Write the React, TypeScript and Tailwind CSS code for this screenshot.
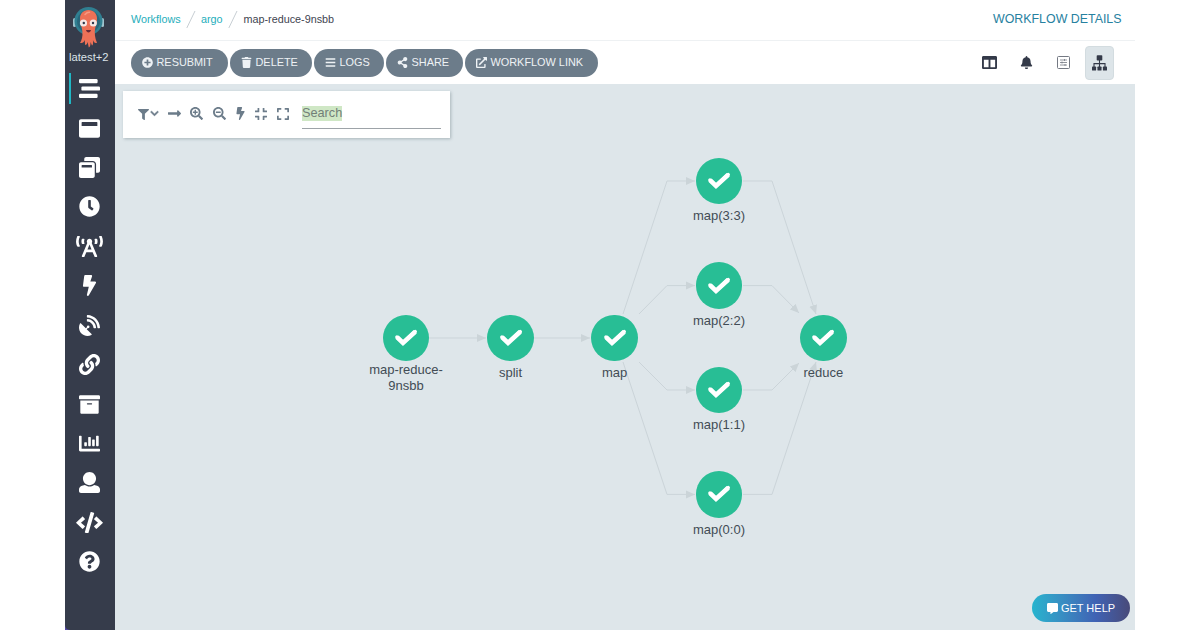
import React from 'react'
import type { IconType } from 'react-icons'
import {
  FaArchive,
  FaBars,
  FaBell,
  FaBolt,
  FaBroadcastTower,
  FaChartBar,
  FaChevronDown,
  FaClock,
  FaCode,
  FaColumns,
  FaCommentAlt,
  FaCompress,
  FaExpand,
  FaExternalLinkAlt,
  FaFilter,
  FaLink,
  FaLongArrowAltRight,
  FaPlusCircle,
  FaQuestionCircle,
  FaSatelliteDish,
  FaSearchMinus,
  FaSearchPlus,
  FaShareAlt,
  FaTrash,
  FaWindowMaximize,
  FaWindowRestore
} from 'react-icons/fa'

interface GraphNode {
  id: string
  label: string
  x: number
  y: number
  wrap?: boolean
}

interface IconProps {
  className?: string
}

const StreamIcon = ({ className }: IconProps) => (
  <svg className={className} viewBox="0 0 21 21" fill="currentColor">
    <rect x="0" y="1" width="18.6" height="4.2" rx="1.2" />
    <rect x="2.4" y="8.4" width="18.6" height="4.2" rx="1.2" />
    <rect x="0" y="15.8" width="18.6" height="4.2" rx="1.2" />
  </svg>
)

const UserIcon = ({ className }: IconProps) => (
  <svg className={className} viewBox="0 0 512 512" fill="currentColor">
    <path d="M256 0c88.366 0 160 71.634 160 160s-71.634 160-160 160S96 248.366 96 160 167.634 0 256 0zm183.283 333.821l-71.313-17.828c-74.923 53.89-165.738 41.864-223.94 0l-71.313 17.828C29.981 344.505 0 382.903 0 426.955V464c0 26.51 21.49 48 48 48h416c26.51 0 48-21.49 48-48v-37.045c0-44.052-29.981-82.45-72.717-93.134z" />
  </svg>
)

const SitemapIcon = ({ className }: IconProps) => (
  <svg className={className} viewBox="0 0 15 16">
    <g fill="currentColor">
      <rect x="4.7" y="0.3" width="5.6" height="5.2" rx="0.8" />
      <rect x="0" y="11.5" width="4.1" height="4.1" rx="0.7" />
      <rect x="5.45" y="11.5" width="4.1" height="4.1" rx="0.7" />
      <rect x="10.9" y="11.5" width="4.1" height="4.1" rx="0.7" />
    </g>
    <path d="M7.5 5V12M2 12V8.6H13V12" fill="none" stroke="currentColor" strokeWidth="1.1" />
  </svg>
)

const CheckIcon = ({ className }: IconProps) => (
  <svg className={className} viewBox="-12 -12 24 24" fill="none" stroke="currentColor">
    <path d="M-9 -0.9L-3 4.9L9.2 -6.3" strokeWidth="4.6" />
    <path d="M-9 -0.9L-3 4.9L9.2 -6.3" strokeWidth="3.6" strokeLinecap="round" />
  </svg>
)

const navItems: { name: string; icon: IconType | React.FC<IconProps>; active?: boolean; wide?: boolean }[] = [
  { name: 'Workflows', icon: StreamIcon, active: true },
  { name: 'Workflow Templates', icon: FaWindowMaximize },
  { name: 'Cluster Workflow Templates', icon: FaWindowRestore },
  { name: 'Cron Workflows', icon: FaClock },
  { name: 'Event Flow', icon: FaBroadcastTower, wide: true },
  { name: 'Sensors', icon: FaBolt },
  { name: 'Event Sources', icon: FaSatelliteDish },
  { name: 'Pipelines', icon: FaLink },
  { name: 'Archived Workflows', icon: FaArchive },
  { name: 'Reports', icon: FaChartBar },
  { name: 'User', icon: UserIcon },
  { name: 'API Docs', icon: FaCode, wide: true },
  { name: 'Help', icon: FaQuestionCircle }
]

const actions: { label: string; icon: IconType; width: string }[] = [
  { label: 'RESUBMIT', icon: FaPlusCircle, width: 'w-[97px]' },
  { label: 'DELETE', icon: FaTrash, width: 'w-[82px]' },
  { label: 'LOGS', icon: FaBars, width: 'w-[70px]' },
  { label: 'SHARE', icon: FaShareAlt, width: 'w-[77px]' },
  { label: 'WORKFLOW LINK', icon: FaExternalLinkAlt, width: 'w-[133px]' }
]

// Node centres, relative to the graph canvas
const nodes: GraphNode[] = [
  { id: 'root', label: 'map-reduce-9nsbb', x: 291, y: 254, wrap: true },
  { id: 'split', label: 'split', x: 395.5, y: 254 },
  { id: 'map', label: 'map', x: 499.7, y: 254 },
  { id: 'map-3', label: 'map(3:3)', x: 604, y: 97 },
  { id: 'map-2', label: 'map(2:2)', x: 604, y: 201.6 },
  { id: 'map-1', label: 'map(1:1)', x: 604, y: 306 },
  { id: 'map-0', label: 'map(0:0)', x: 604, y: 410.4 },
  { id: 'reduce', label: 'reduce', x: 708.4, y: 254 }
]

const edges = [
  'M314 254H371',
  'M419 254H475',
  'M508 230L552 97H580',
  'M524 230L552 201.6H580',
  'M524 278L552 306H580',
  'M508 278L552 410.4H580',
  'M628 97H657L701 230',
  'M628 201.6H657L684 229',
  'M628 306H657L684 279',
  'M628 410.4H657L701 278'
]

const Logo = () => (
  <svg className="h-[43px] w-[33px]" viewBox="0 0 33 43">
    <rect x="1" y="13" width="3" height="9" rx="1.5" fill="#9fc3cd" />
    <rect x="29" y="13" width="3" height="9" rx="1.5" fill="#9fc3cd" />
    <circle cx="16.5" cy="16" r="14" fill="#307f91" />
    <circle cx="16.5" cy="16.5" r="11.4" fill="#28677b" />
    <path
      d="M16.5 5C11.2 5 8 8.8 8 13.6C8 17 8.9 20 9.8 23C10.9 28 10.8 32 9 36.2L8 37.7C10 38.8 12 37.4 12.7 35L13.1 39.8C14.7 40.6 15.4 38 15.6 37L16.8 42.5C18.4 41.8 18.6 39 18.5 37L20 40.5C21.5 40 21.2 37 20.9 35C21.8 37.4 23.1 38.6 25 37.8C22.9 33.4 22.2 28 23.2 23C24.1 20 25 17 25 13.6C25 8.8 21.8 5 16.5 5Z"
      fill="#ed7157"
    />
    <circle cx="11.5" cy="18" r="3.6" fill="#f5e8e6" />
    <circle cx="21.3" cy="18" r="3.6" fill="#f5e8e6" />
    <circle cx="11.8" cy="18" r="1.2" fill="#30384a" />
    <circle cx="21" cy="18" r="1.2" fill="#30384a" />
    <path d="M14 25H19C18.5 28.2 14.5 28.2 14 25Z" fill="#6b2a37" />
    <path d="M13 9.5Q15 7.2 17.5 7.3" stroke="#f69a82" strokeWidth="1.5" fill="none" strokeLinecap="round" />
  </svg>
)

const Sidebar = () => (
  <div className="w-[49.5px] shrink-0 bg-[#5146a0]">
    <aside className="flex h-full flex-col items-center rounded-bl-[5px] bg-[#363c4b] text-white">
      <div className="flex h-[69px] flex-col items-center pt-[5px] pr-[2px]">
        <Logo />
        <span className="text-[11.2px] leading-[18px] text-[#dce3e9]">latest+2</span>
      </div>
      <nav className="flex w-full flex-col">
        {navItems.map(({ name, icon: Icon, active, wide }) => (
          <a key={name} aria-label={name} className="flex h-[39.43px] w-full items-center">
            <span className={active ? 'ml-1 h-[31px] w-[2px] bg-[#20b7c5]' : 'ml-1 w-[2px]'} />
            <span className="flex w-[36.5px] justify-center">
              <Icon className={wide ? 'h-[21.5px] w-[27px] shrink-0' : 'h-[21px] w-[21px] shrink-0'} />
            </span>
          </a>
        ))}
      </nav>
    </aside>
  </div>
)

const Separator = () => (
  <svg className="h-[20px] w-[10px]" viewBox="0 0 10 20">
    <path d="M0.8 19L9 2" stroke="#c7ced3" strokeWidth="1" />
  </svg>
)

const TopBar = () => (
  <header className="flex h-[41px] items-center justify-between border-b border-[#eef1f3] pr-[13.5px] pb-[1px] pl-[16.5px]">
    <div className="flex items-center pb-[1px] text-[10.8px] text-[#26aebb]">
      <span className="w-[50px] whitespace-nowrap">Workflows</span>
      <span className="mx-[5px] flex"><Separator /></span>
      <span className="w-[21.5px]">argo</span>
      <span className="mr-[6px] ml-[5px] flex"><Separator /></span>
      <span className="whitespace-nowrap text-[#414450]">map-reduce-9nsbb</span>
    </div>
    <h1 className="text-[12.4px] text-[#2681a0]">WORKFLOW DETAILS</h1>
  </header>
)

const ActionBar = () => (
  <div className="flex h-[43px] items-center justify-between pr-[21px] pl-[16.5px]">
    <div className="flex gap-[2px]">
      {actions.map(({ label, icon: Icon, width }) => (
        <button
          key={label}
          className={`flex h-[28px] items-center gap-[4px] rounded-full bg-[#6c7c8a] pl-[10.5px] text-[10.9px] whitespace-nowrap text-[#eef2f5] ${width}`}
        >
          <Icon className="h-[11px] w-auto shrink-0" />
          <span>{label}</span>
        </button>
      ))}
    </div>
    <div className="flex items-center text-[#343a49]">
      <FaColumns className="h-[15px] w-[15px]" />
      <FaBell className="ml-[23px] h-[13px] w-auto" />
      <svg className="ml-[24px] h-[13px] w-[13px]" viewBox="0 0 13 13" fill="none" stroke="#747983">
        <rect x="0.5" y="0.5" width="12" height="12" rx="1" />
        <path d="M3 4H10M3 6.5H10M3 9H10M7.5 3V5M5 5.5V7.5M8 8V10" strokeWidth="0.8" />
      </svg>
      <div className="ml-[15px] flex h-[34px] w-[29px] items-center justify-center rounded-[4px] border border-[#d3dce0] bg-[#dde5e9]">
        <SitemapIcon className="h-[16px] w-[15px] shrink-0" />
      </div>
    </div>
  </div>
)

const GraphToolbar = () => (
  <div className="absolute top-[7px] left-[8px] flex h-[47px] w-[327px] items-center bg-white pb-[2px] pl-[15.5px] text-[#6c7c8a] shadow-[1px_1px_3px_#a8b5bb]">
    <FaFilter className="mt-[2px] h-[11px] w-[11px]" />
    <FaChevronDown className="ml-[1px] h-[9px] w-[9px]" stroke="currentColor" strokeWidth={30} />
    <FaLongArrowAltRight className="ml-[9px] h-[15px] w-[13px]" />
    <FaSearchPlus className="ml-[9px] h-[13px] w-[13px]" />
    <FaSearchMinus className="ml-[10px] h-[13px] w-[13px]" />
    <FaBolt className="ml-[10px] h-[13px] w-[9px]" />
    <FaCompress className="ml-[10px] h-[14px] w-[12px]" />
    <FaExpand className="ml-[10px] h-[14px] w-[12px]" />
    <div className="ml-[13px] flex h-[30px] w-[139px] items-center border-b border-[#9da3a8]">
      <span className="mt-[1px] h-[15px] bg-[#cfe7c5] text-[12.7px] leading-[15px] text-[#728078]">Search</span>
    </div>
  </div>
)

const Graph = () => (
  <main className="relative flex-1 overflow-hidden bg-[#dee6ea]">
    <svg className="absolute top-0 left-[0.5px] h-[546px] w-[1020px]" viewBox="0 0 1020 546" fill="none">
      <defs>
        <marker id="arrow" markerUnits="userSpaceOnUse" markerWidth="10" markerHeight="10" refX="9" refY="5" orient="auto">
          <path d="M0 1L9 5L0 9Z" fill="#cbd4d8" />
        </marker>
      </defs>
      {edges.map((d) => (
        <path key={d} d={d} stroke="#cbd4d9" strokeWidth="1" markerEnd="url(#arrow)" />
      ))}
    </svg>
    {nodes.map(({ id, label, x, y, wrap }) => (
      <div
        key={id}
        className="absolute ml-[0.5px] flex w-[84px] -translate-x-1/2 flex-col items-center"
        style={{ left: x, top: y - 23.25 }}
      >
        <div className="flex h-[46.5px] w-[46.5px] items-center justify-center rounded-full bg-[#28be95]">
          <CheckIcon className="h-[24px] w-[24px] text-white" />
        </div>
        <span className={`text-center text-[13px] leading-4 text-[#424c55] ${wrap ? 'mt-[1px]' : 'mt-[4px]'}`}>
          {label}
        </span>
      </div>
    ))}
    <GraphToolbar />
    <button className="absolute right-[5px] bottom-[8px] flex h-[28px] w-[98px] items-center justify-center gap-[3px] rounded-full bg-linear-to-r from-[#25b4ce] via-[#3f62b4] via-65% to-[#484a79] text-[11px] whitespace-nowrap text-white">
      <FaCommentAlt className="h-[11px] w-[11px]" />
      <span>GET HELP</span>
    </button>
  </main>
)

export default function App() {
  return (
    <div className="flex h-[630px] w-[1200px] justify-center overflow-hidden bg-white font-['Liberation_Sans',Arial,sans-serif]">
      <div className="flex w-[1070px]">
        <Sidebar />
        <div className="flex min-w-0 flex-1 flex-col">
          <TopBar />
          <ActionBar />
          <Graph />
        </div>
      </div>
    </div>
  )
}
